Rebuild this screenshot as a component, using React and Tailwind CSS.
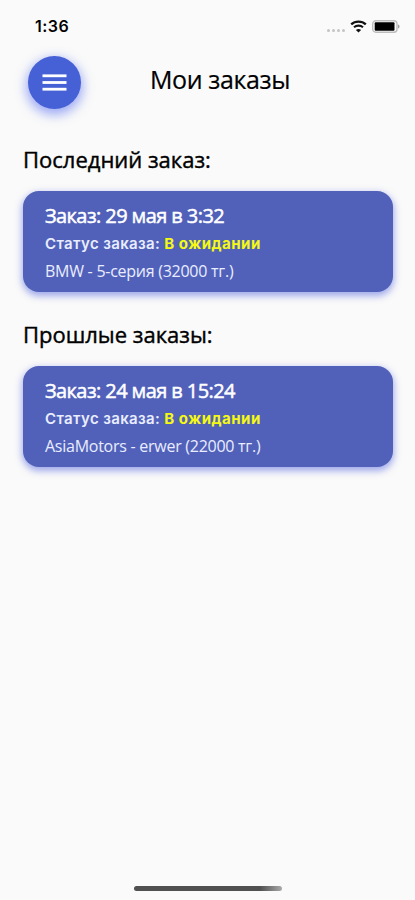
import React from 'react';

const lastOrders = [
  { id: 1, date: '29 мая в 3:32', status: 'В ожидании', car: 'BMW - 5-серия (32000 тг.)' },
];

const pastOrders = [
  { id: 2, date: '24 мая в 15:24', status: 'В ожидании', car: 'AsiaMotors - erwer (22000 тг.)' },
];

function StatusBar() {
  return (
    <div className="h-[52px] pl-[35px] pr-[15px] flex items-center justify-between">
      <span className="font-['Inter',sans-serif] text-[16px] leading-5 tracking-[0.5px] font-semibold text-black">1:36</span>
      <div className="flex items-center">
        {/* No signal dots */}
        <div className="flex gap-[2px] mt-[8px] mr-[5px]">
          <span className="w-[3px] h-[3px] rounded-full bg-[#c4c4c4]" />
          <span className="w-[3px] h-[3px] rounded-full bg-[#c4c4c4]" />
          <span className="w-[3px] h-[3px] rounded-full bg-[#c4c4c4]" />
          <span className="w-[3px] h-[3px] rounded-full bg-[#c4c4c4]" />
        </div>
        <svg width="17" height="13" viewBox="0 0 17 13" fill="none" className="mr-[5px]">
          <path d="M1.2 4.3C5.2 0.6 11.8 0.6 15.8 4.3" stroke="#111" strokeWidth="2.3" />
          <path d="M4 7.3C6.5 5 10.5 5 13 7.3" stroke="#111" strokeWidth="2.1" />
          <path d="M8.5 12.6L5.9 9.9C7.3 8.6 9.7 8.6 11.1 9.9Z" fill="#111" />
        </svg>
        <svg width="28" height="13" viewBox="0 0 28 13" fill="none">
          <rect x="0.7" y="0.7" width="24.3" height="11.6" rx="3.2" stroke="#bdbdbd" strokeWidth="1.4" />
          <rect x="2.7" y="2.3" width="19.8" height="8.4" rx="1" fill="#000" />
          <path d="M26 4.5C28 5 28 8 26 8.5Z" fill="#a0a0a0" />
        </svg>
      </div>
    </div>
  );
}

function OrderCard({ order }) {
  return (
    <div className="h-[101px] rounded-[16px] bg-[#5161b9] shadow-[0_3px_7px_1px_rgba(70,90,220,0.5)] pl-[22px] pt-[11px] text-white whitespace-nowrap">
      <p className="text-[20px] leading-7 tracking-[-0.58px] [-webkit-text-stroke:0.5px_currentColor]">Заказ: {order.date}</p>
      <p className="font-['Inter',sans-serif] text-[15px] leading-7 tracking-[0.36px] font-semibold text-[#e9edff]">
        Статус заказа: <span className="font-bold tracking-[0.5px] text-[#f5f912]">{order.status}</span>
      </p>
      <p className="text-[16px] leading-[26px] tracking-[-0.26px] text-[#e9edff]">{order.car}</p>
    </div>
  );
}

function OrderSection({ title, orders }) {
  return (
    <section className="h-[175px]">
      <h2 className="h-[50px] pt-[2px] text-[22px] leading-8 text-black whitespace-nowrap [-webkit-text-stroke:0.4px_currentColor]">
        {title}
      </h2>
      {orders.map((order) => (
        <OrderCard key={order.id} order={order} />
      ))}
    </section>
  );
}

function App() {
  return (
    <div className="h-[900px] w-full overflow-hidden bg-[#fafafa] font-['Open_Sans',sans-serif] flex flex-col">
      <StatusBar />

      <header className="h-[89px] flex items-start pl-[28px]">
        <button
          aria-label="Меню"
          className="mt-[4px] w-[53px] h-[53px] rounded-full bg-[#4660d5] shadow-[0_4px_11px_2px_rgba(70,96,240,0.5)] flex items-center justify-center"
        >
          <svg width="25" height="17" viewBox="0 0 25 17" fill="#fff">
            <rect x="0.5" y="0.4" width="24" height="2.8" />
            <rect x="0.5" y="7.1" width="24" height="2.8" />
            <rect x="0.5" y="13.8" width="24" height="2.8" />
          </svg>
        </button>
        <h1 className="ml-[69px] mt-[11px] text-[25px] leading-8 tracking-[-0.4px] text-black whitespace-nowrap [-webkit-text-stroke:0.2px_currentColor]">
          Мои заказы
        </h1>
      </header>

      <main className="grow pl-[23px] pr-[22px]">
        <OrderSection title="Последний заказ:" orders={lastOrders} />
        <OrderSection title="Прошлые заказы:" orders={pastOrders} />
      </main>

      {/* Home indicator */}
      <div className="h-[15px] pl-[134px]">
        <div className="w-[148px] h-[5px] mt-[1px] rounded-full bg-linear-to-r from-[#505050] from-85% to-[#aaaaaa]" />
      </div>
    </div>
  );
}

export default App;
